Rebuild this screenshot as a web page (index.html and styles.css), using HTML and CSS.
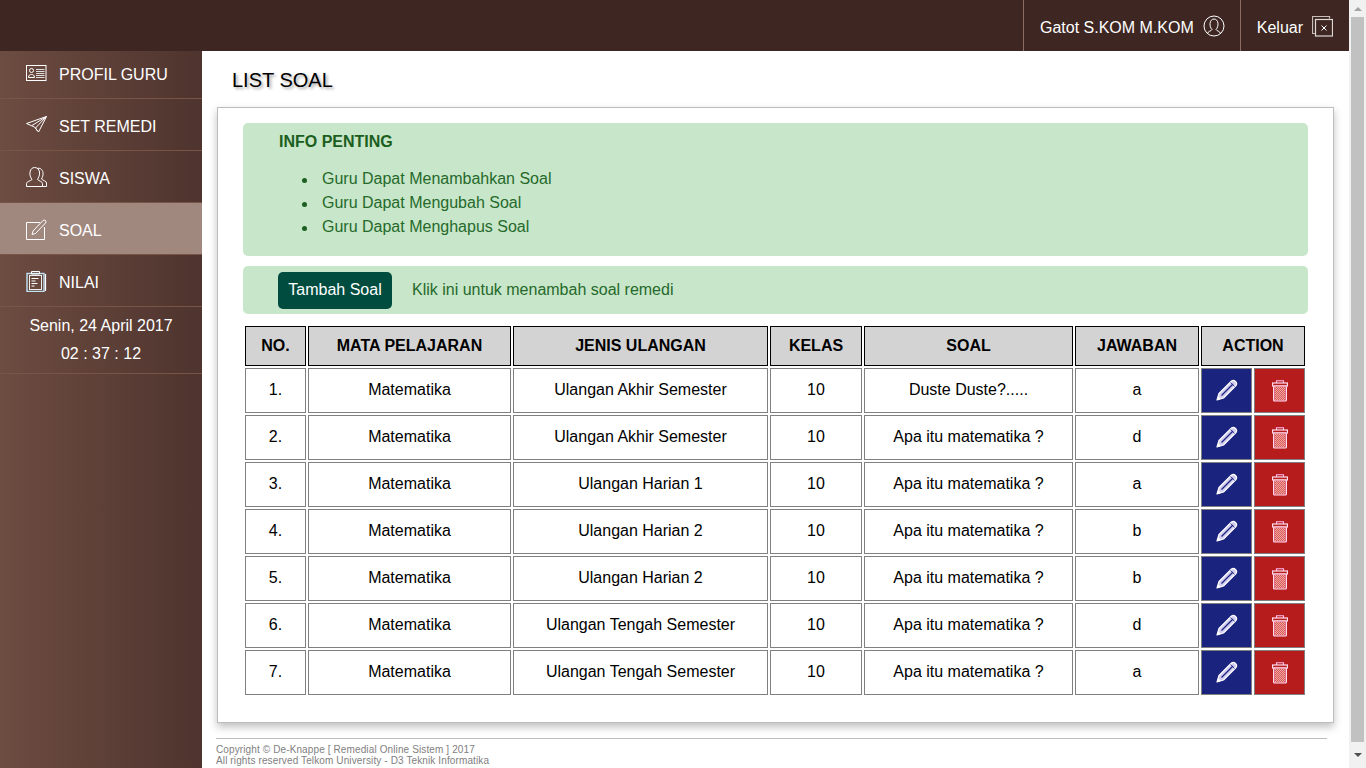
FILE: index.html
```html
<!DOCTYPE html>
<html>
<head>
  <title>List Soal</title>
  <link rel="stylesheet" href="styles.css">
</head>
<body>
  <svg class="defs" width="0" height="0">
    <defs>
      <symbol id="ic-pencil" viewBox="0 0 22 22">
        <path d="M1 21 L3 14.5 L15.5 2 Q17.5 0.5 19.5 2.5 Q21.5 4.5 20 6.5 L7.5 19 Z" fill="#d3cdf0" stroke="#fff" stroke-width="1.2" stroke-linejoin="round"/>
        <path d="M5.5 16.5 L17 5" fill="none" stroke="#1a237e" stroke-width="1.2"/>
        <path d="M14.5 3.5 L18.5 7.5" fill="none" stroke="#1a237e" stroke-width="0.8"/>
        <path d="M1 21 L2.2 17.2 L4.9 19.9 Z" fill="#fff"/>
      </symbol>
      <symbol id="ic-trash" viewBox="0 0 16 22">
        <path d="M4.5 3 V0.7 H11.5 V3" fill="none" stroke="#fbe" stroke-width="1.1"/>
        <rect x="0.6" y="3" width="14.8" height="3" fill="none" stroke="#fde" stroke-width="1.2"/>
        <rect x="1.6" y="6" width="12.8" height="15" rx="1" fill="#d9506a" stroke="#fde" stroke-width="1.2"/>
        <path d="M3 7.5 H13 M3 9.5 H13 M3 11.5 H13 M3 13.5 H13 M3 15.5 H13 M3 17.5 H13 M3 19.5 H13" stroke="#f0b090" stroke-dasharray="1 1"/>
        <path d="M4 8.5 H13 M4 10.5 H13 M4 12.5 H13 M4 14.5 H13 M4 16.5 H13 M4 18.5 H13" stroke="#f0b090" stroke-dasharray="1 1"/>
      </symbol>
    </defs>
  </svg>

  <div class="app">
    <div class="page">
      <header class="topbar">
        <div class="topitem">
          Gatot S.KOM M.KOM
          <svg class="icon-user" width="22" height="22" viewBox="0 0 22 22" fill="none" stroke="#fff" stroke-width="1">
            <circle cx="11" cy="11" r="10"/>
            <path d="M4.5 18.5 C5 16 8.5 16 9 14.5 C7.5 13 6.8 10.5 7 8.5 C7.3 5.5 9 4 11 4 C13 4 14.7 5.5 15 8.5 C15.2 10.5 14.5 13 13 14.5 C13.5 16 17 16 17.5 18.5"/>
          </svg>
        </div>
        <div class="topitem">
          Keluar
          <svg class="icon-exit" width="21" height="21" viewBox="0 0 21 21" fill="none" stroke-width="1">
            <path d="M17.5 2.5 V0.5 H0.5 V17.5 H3" stroke="#c9bdb9" stroke-width="1.2"/>
            <rect x="3.5" y="3.5" width="17" height="16.5" stroke="#e0d8d5" stroke-width="1.2"/>
            <path d="M9.5 9.5 L14.5 14.5 M14.5 9.5 L9.5 14.5" stroke="#fff"/>
          </svg>
        </div>
      </header>

      <div class="body-row">
        <aside class="sidebar">
          <a class="menu first">
            <svg class="menu-icon" width="21" height="16" viewBox="0 0 21 16" fill="none" stroke="#fff">
              <rect x="0.5" y="0.5" width="19.5" height="15"/>
              <circle cx="5.5" cy="5.5" r="2"/>
              <path d="M2.5 12.5 C2.5 10 4 9.5 5.5 9.5 C7 9.5 8.5 10 8.5 12.5 Z"/>
              <path d="M10 4.5 H18.5 M10 6.5 H18.5 M10 8.5 H18.5 M10 10.5 H18.5 M10 12.5 H18.5" stroke="#ddd"/>
            </svg>
            PROFIL GURU
          </a>
          <a class="menu">
            <svg class="menu-icon" width="21" height="18" viewBox="0 0 21 18" fill="none" stroke="#fff">
              <path d="M0.5 7.5 L20.5 0.5 L12.5 16 L8.5 11 Z"/>
              <path d="M20.5 0.5 L6 9.5 M20.5 0.5 L9.5 12 L11.5 15"/>
            </svg>
            SET REMEDI
          </a>
          <a class="menu">
            <svg class="menu-icon" width="21" height="20" viewBox="0 0 21 20" fill="none" stroke="#fff">
              <path d="M0.5 19.5 V16.5 C0.5 14.5 4.5 14 6 12.5 C4.5 10.5 3.5 8 4 5 C4.5 2 6.5 0.5 8.5 0.5 C11 0.5 13 2 13.5 5 C14 8 12.5 10.5 11.5 12.5 C13 14 16.5 14.5 16.5 16.5 V19.5 Z"/>
              <path d="M11 1.5 C14 0.5 16.5 2.5 17 5.5 C17.3 8 16.5 10.5 15.5 12 C17 13.5 20.5 14 20.5 16 V19.5 H16.5"/>
            </svg>
            SISWA
          </a>
          <a class="menu active">
            <svg class="menu-icon" width="21" height="21" viewBox="0 0 21 21" fill="none" stroke="#fff">
              <path d="M14 3.5 H0.5 V20.5 H18.5 V8" stroke-width="1"/>
              <path d="M6 15.5 L7 12 L17 1.5 Q18.5 0.5 19.5 1.5 Q20.5 3 19.5 4 L9.5 14.5 Z"/>
            </svg>
            SOAL
          </a>
          <a class="menu">
            <svg class="menu-icon" width="20" height="21" viewBox="0 0 20 21" fill="none" stroke="#fff">
              <rect x="0.5" y="2.5" width="17" height="18" stroke="#bfe3f5" stroke-width="1.4"/>
              <rect x="3" y="4.5" width="12" height="14" stroke="#eee"/>
              <path d="M5 0.5 H13 V3 H5 Z" stroke="#fff"/>
              <path d="M19 3 V20" stroke="#fff" stroke-width="1.2"/>
              <path d="M5 7.5 H12 M5 10 H9 M5 12.5 H11 M5 15 H8" stroke="#fff"/>
            </svg>
            NILAI
          </a>
          <div class="clock">
            <div>Senin, 24 April 2017</div>
            <div>02 : 37 : 12</div>
          </div>
        </aside>

        <main class="content">
          <h1 class="title">LIST SOAL</h1>
          <section class="card">
            <div class="notice info">
              <h4>INFO PENTING</h4>
              <ul>
                <li>Guru Dapat Menambahkan Soal</li>
                <li>Guru Dapat Mengubah Soal</li>
                <li>Guru Dapat Menghapus Soal</li>
              </ul>
            </div>
            <div class="notice addbar">
              <button class="btn-add">Tambah Soal</button>
              <span>Klik ini untuk menambah soal remedi</span>
            </div>
            <table class="soal">
              <colgroup>
                <col class="c-no"><col class="c-mapel"><col class="c-jenis"><col class="c-kelas"><col class="c-soal"><col class="c-jawab"><col class="c-act"><col class="c-act">
              </colgroup>
              <thead>
                <tr><th>NO.</th><th>MATA PELAJARAN</th><th>JENIS ULANGAN</th><th>KELAS</th><th>SOAL</th><th>JAWABAN</th><th colspan="2">ACTION</th></tr>
              </thead>
              <tbody>
                <tr><td>1.</td><td>Matematika</td><td>Ulangan Akhir Semester</td><td>10</td><td>Duste Duste?.....</td><td>a</td>
                  <td class="edit"><svg width="22" height="22"><use href="#ic-pencil"/></svg></td><td class="del"><svg width="16" height="22"><use href="#ic-trash"/></svg></td></tr>
                <tr><td>2.</td><td>Matematika</td><td>Ulangan Akhir Semester</td><td>10</td><td>Apa itu matematika ?</td><td>d</td>
                  <td class="edit"><svg width="22" height="22"><use href="#ic-pencil"/></svg></td><td class="del"><svg width="16" height="22"><use href="#ic-trash"/></svg></td></tr>
                <tr><td>3.</td><td>Matematika</td><td>Ulangan Harian 1</td><td>10</td><td>Apa itu matematika ?</td><td>a</td>
                  <td class="edit"><svg width="22" height="22"><use href="#ic-pencil"/></svg></td><td class="del"><svg width="16" height="22"><use href="#ic-trash"/></svg></td></tr>
                <tr><td>4.</td><td>Matematika</td><td>Ulangan Harian 2</td><td>10</td><td>Apa itu matematika ?</td><td>b</td>
                  <td class="edit"><svg width="22" height="22"><use href="#ic-pencil"/></svg></td><td class="del"><svg width="16" height="22"><use href="#ic-trash"/></svg></td></tr>
                <tr><td>5.</td><td>Matematika</td><td>Ulangan Harian 2</td><td>10</td><td>Apa itu matematika ?</td><td>b</td>
                  <td class="edit"><svg width="22" height="22"><use href="#ic-pencil"/></svg></td><td class="del"><svg width="16" height="22"><use href="#ic-trash"/></svg></td></tr>
                <tr><td>6.</td><td>Matematika</td><td>Ulangan Tengah Semester</td><td>10</td><td>Apa itu matematika ?</td><td>d</td>
                  <td class="edit"><svg width="22" height="22"><use href="#ic-pencil"/></svg></td><td class="del"><svg width="16" height="22"><use href="#ic-trash"/></svg></td></tr>
                <tr><td>7.</td><td>Matematika</td><td>Ulangan Tengah Semester</td><td>10</td><td>Apa itu matematika ?</td><td>a</td>
                  <td class="edit"><svg width="22" height="22"><use href="#ic-pencil"/></svg></td><td class="del"><svg width="16" height="22"><use href="#ic-trash"/></svg></td></tr>
              </tbody>
            </table>
          </section>
          <footer class="foot">
            Copyright &copy; De-Knappe [ Remedial Online Sistem ] 2017<br>
            All rights reserved Telkom University - D3 Teknik Informatika
          </footer>
        </main>
      </div>
    </div>

    <div class="scrollbar">
      <div class="arrow up"></div>
      <div class="thumb"></div>
      <div class="arrow down"></div>
    </div>
  </div>
</body>
</html>
```

FILE: styles.css
```css
html, body {
  margin: 0;
  height: 768px;
  overflow: hidden;
}
body {
  font-family: "Liberation Sans", Arial, sans-serif;
  font-size: 16px;
  color: #000;
  background: #fff;
}
.defs { position: absolute; }
.app {
  display: flex;
  height: 768px;
}
.page {
  flex: 1;
  display: flex;
  flex-direction: column;
  min-width: 0;
}

/* top bar */
.topbar {
  height: 51px;
  background: #3e2723;
  color: #fff;
  display: flex;
  justify-content: flex-end;
  flex-shrink: 0;
}
.topitem {
  display: flex;
  align-items: center;
  border-left: 1px solid #8d6e63;
  padding: 5px 16px 0 16px;
}
.topitem:first-child { padding-right: 15px; }
.icon-user { margin-left: 9px; margin-top: -5px; }
.icon-exit { margin-left: 9px; margin-top: -4px; }

/* sidebar */
.body-row {
  flex: 1;
  display: flex;
  min-height: 0;
}
.sidebar {
  width: 202px;
  flex-shrink: 0;
  background: linear-gradient(to right, #6d4c41, #4e342e);
  color: #fff;
}
.menu {
  display: flex;
  align-items: center;
  height: 52px;
  box-sizing: border-box;
  border-bottom: 1px solid #795548;
  padding: 4px 0 0 26px;
}
.menu.first {
  height: 48px;
  padding-top: 0;
}
.menu.active {
  background: #a1887f;
}
.menu-icon {
  width: 21px;
  margin: 0 12px 3px 0;
  flex-shrink: 0;
}
.clock {
  height: 67px;
  border-bottom: 1px solid #795548;
  text-align: center;
  line-height: 28px;
  padding-top: 5px;
  box-sizing: border-box;
}

/* content */
.content {
  flex: 1;
  min-width: 0;
  padding: 0 15px;
}
.title {
  margin: 0;
  padding: 18px 0 0 15px;
  height: 56px;
  box-sizing: border-box;
  font-size: 20px;
  line-height: 23px;
  font-weight: normal;
  text-shadow: 2px 2px 3px #aaa;
}
.card {
  height: 616px;
  box-sizing: border-box;
  border: 1px solid #bdbdbd;
  padding: 15px 25px 0 25px;
  box-shadow: 0 4px 8px rgba(0, 0, 0, 0.25);
}
.notice {
  background: #c8e6c9;
  color: #256a2b;
  border-radius: 5px;
}
.info {
  height: 133px;
  padding: 9px 35px 0 36px;
  box-sizing: border-box;
}
.info h4 {
  margin: 0 0 16px 0;
  font-size: 16px;
  line-height: 19px;
  color: #1b5e20;
}
.info ul {
  list-style: none;
  margin: 0;
  padding-left: 23px;
  line-height: 24px;
}
.info li {
  display: flex;
  align-items: center;
}
.info li::before {
  content: "";
  width: 5px;
  height: 5px;
  border-radius: 50%;
  background: #1b5e20;
  margin: 2px 15px 0 0;
}
.addbar {
  display: flex;
  align-items: center;
  height: 48px;
  margin-top: 10px;
  padding-left: 35px;
}
.btn-add {
  background: #004d40;
  color: #fff;
  border: 0;
  border-radius: 5px;
  font: inherit;
  height: 37px;
  width: 114px;
  padding: 0;
  margin-right: 20px;
}

/* table */
.soal {
  table-layout: fixed;
  border-collapse: separate;
  border-spacing: 2px;
  width: 1064px;
  margin-top: 10px;
  text-align: center;
}
.c-no { width: 61px; }
.c-mapel { width: 203px; }
.c-jenis { width: 255px; }
.c-kelas { width: 92px; }
.c-soal { width: 209px; }
.c-jawab { width: 124px; }
.c-act { width: 51px; }
.soal th {
  height: 40px;
  padding: 0;
  box-sizing: border-box;
  background: lightgray;
  border: 1px solid #000;
}
.soal td {
  height: 45px;
  padding: 0 0 2px 0;
  box-sizing: border-box;
  border: 1px solid #808080;
}
.soal svg {
  display: block;
  margin: 0 auto;
}
.soal .edit {
  background: #1a237e;
  padding: 0 0 1px 1px;
}
.soal .del {
  background: #b71c1c;
  padding: 1px 0 0 1px;
}

/* footer */
.foot {
  margin: 15px 7px 0 -1px;
  padding-top: 5px;
  border-top: 1px solid #bdbdbd;
  font-size: 10px;
  line-height: 11px;
  letter-spacing: 0.12px;
  color: #808080;
}

/* scrollbar */
.scrollbar {
  width: 17px;
  flex-shrink: 0;
  background: #f1f1f1;
  display: flex;
  flex-direction: column;
  align-items: center;
}
.arrow {
  height: 17px;
  flex-shrink: 0;
  display: flex;
  align-items: center;
}
.arrow.down { height: 26px; }
.arrow::after {
  content: "";
  border-left: 4px solid transparent;
  border-right: 4px solid transparent;
}
.arrow.up::after { border-bottom: 4px solid #a3a3a3; }
.arrow.down::after { border-top: 4px solid #505050; }
.thumb {
  flex: 1;
  width: 13px;
  background: #c1c1c1;
}
```
